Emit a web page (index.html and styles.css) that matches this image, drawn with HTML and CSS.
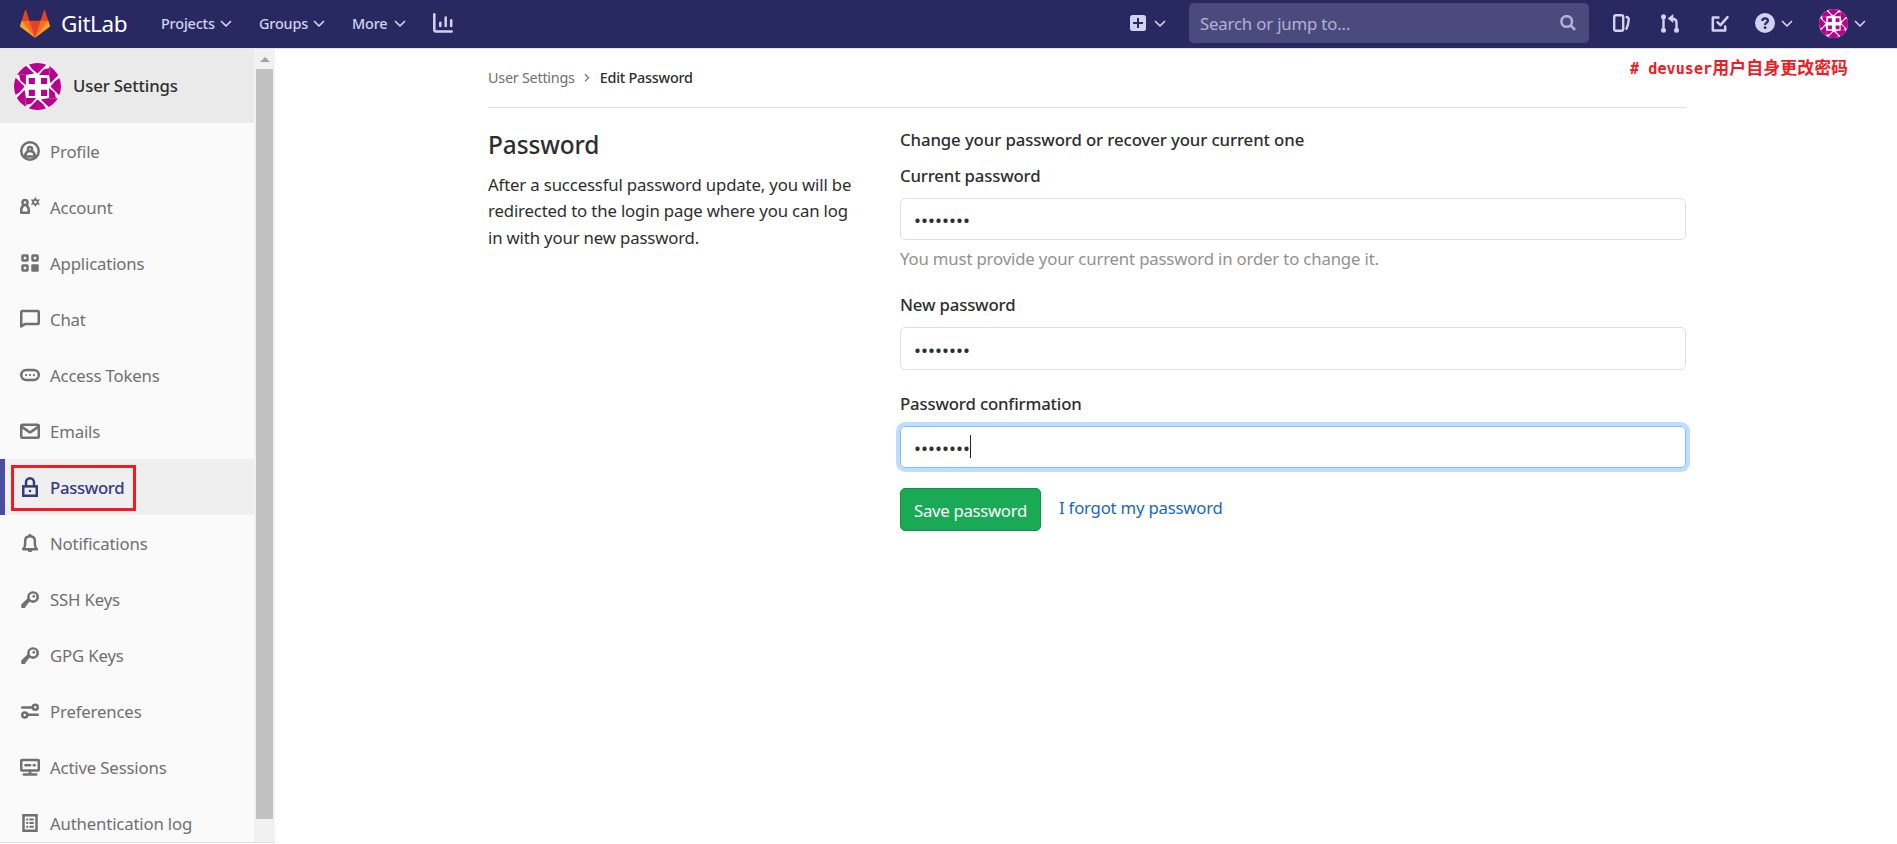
FILE: index.html
```html
<!DOCTYPE html>
<html lang="en">
<head>
<meta charset="utf-8">
<title>Edit Password · GitLab</title>
<link rel="stylesheet" href="styles.css">
</head>
<body>
<svg class="defs" aria-hidden="true">
  <symbol id="chevron" viewBox="0 0 12 8"><path d="M1.500 1.500 6 6l4.500-4.500" fill="none" stroke="currentColor" stroke-width="1.700" stroke-linecap="round" stroke-linejoin="round"/></symbol>
  <symbol id="key" viewBox="0 0 16 16"><path fill-rule="evenodd" d="M7.700 10.200 5.700 12.200v1.200H4.400v1.300l-.5.500H1.600a.6.6 0 0 1-.6-.6v-2.200l4.900-4.900a4.700 4.700 0 1 1 1.800 2.700zM10.400 9a2.700 2.700 0 1 0 0-5.400 2.700 2.700 0 0 0 0 5.400zM11 6.900a1.100 1.100 0 1 1 0-2.200 1.100 1.100 0 0 1 0 2.200z"/></symbol>
  <symbol id="identicon" viewBox="0 0 47 47">
    <circle cx="23.500" cy="23.500" r="23.500" fill="#fff"/>
    <clipPath id="round"><circle cx="23.500" cy="23.500" r="23.500"/></clipPath>
    <g fill="#b8008f" clip-path="url(#round)">
      <g id="arm"><path d="M11.700 1v10.700H1.500L6 7zM11.700 2.500l8.500 8-8.500 1.500zM14 0h20l-5 5-5.500 5.500L18 6zM35.200 5v6.900H25l4.500-5.500z"/></g>
      <use href="#arm" transform="rotate(90 23.500 23.500)"/>
      <use href="#arm" transform="rotate(180 23.500 23.500)"/>
      <use href="#arm" transform="rotate(270 23.500 23.500)"/>
      <path d="M14.700 15h6.200v6h-6.200zM27 15h6.200v6H27zM14.700 26.700h6.200v6.200h-6.200zM27 26.700h6.200v6.200H27z"/>
    </g>
  </symbol>
</svg>

<header class="navbar">
  <a class="brand">
    <svg class="tanuki" viewBox="0 0 36 36">
      <path fill="#e24329" d="M2 14l9.380 9v-9l-4-12.280c-.205-.632-1.176-.632-1.380 0zM34 14l-9.380 9v-9l4-12.280c.205-.632 1.176-.632 1.380 0zM18 34.380 3 14h30z"/>
      <path fill="#fc6d26" d="M18 34.380 11.380 14H2l4 11zM18 34.380 24.620 14H34l-4 11z"/>
      <path fill="#fca326" d="M2 14 .1 20.160c-.18.565 0 1.200.5 1.560l17.420 12.660zM34 14l1.900 6.160c.18.565 0 1.200-.5 1.560L18 34.380z"/>
    </svg>
    <span class="brand-name">GitLab</span>
  </a>
  <nav class="menu">
    <a class="menu-item projects">Projects <svg class="chev"><use href="#chevron"/></svg></a>
    <a class="menu-item groups">Groups <svg class="chev"><use href="#chevron"/></svg></a>
    <a class="menu-item more">More <svg class="chev"><use href="#chevron"/></svg></a>
    <svg class="icon20" viewBox="0 0 20 20" fill="none" stroke="currentColor" stroke-width="2.500" stroke-linecap="round"><path d="M1.300 1.300V16.800a1.800 1.800 0 0 0 1.800 1.800h15.600M7.300 9.800v3.200M12.700 4.500v8.500M18.200 7.200v5.800"/></svg>
  </nav>
  <div class="tools">
    <a class="tool new">
      <svg class="icon16" viewBox="0 0 16 16"><path fill="currentColor" fill-rule="evenodd" d="M2.500 0h11A2.500 2.500 0 0 1 16 2.500v11a2.500 2.500 0 0 1-2.500 2.500h-11A2.500 2.500 0 0 1 0 13.500v-11A2.500 2.500 0 0 1 2.500 0zM7 3v4H3v2h4v4h2V9h4V7H9V3z"/></svg>
      <svg class="chev"><use href="#chevron"/></svg>
    </a>
    <div class="search">
      <span>Search or jump to...</span>
      <svg class="icon16" viewBox="0 0 16 16" fill="none" stroke="currentColor" stroke-width="2.500"><circle cx="6.700" cy="6.500" r="5.300"/><path d="m10.700 10.500 4.400 4.400"/></svg>
    </div>
    <svg class="icon-issues" viewBox="0 0 17 18" fill="none" stroke="currentColor" stroke-width="2.400" stroke-linecap="round"><rect x="1.200" y="1.200" width="9" height="15.600" rx="1.800"/><path d="M13.600 3c1.700.5 2.300 1.100 2.100 3-.3 3-.8 6-2.200 8.800"/></svg>
    <svg class="icon-merge" viewBox="0 0 18 19" fill="none" stroke="currentColor" stroke-width="2.400"><path d="M2.500 3v13M15.500 15V8.500c0-2.300-1.500-3.800-4.500-3.800"/><path fill="currentColor" stroke="none" d="M12.300 0v9L6.700 4.600z"/><g fill="currentColor" stroke="none"><circle cx="2.500" cy="2.700" r="2.500"/><circle cx="2.500" cy="16.200" r="2.500"/><circle cx="15.500" cy="16.200" r="2.500"/></g></svg>
    <svg class="icon-todo" viewBox="0 0 18 17" fill="none" stroke="currentColor" stroke-width="2.500" stroke-linecap="round" stroke-linejoin="round"><path d="M7.500 2.400H1.800v13.200h12.400v-4.200M6.600 7.300l2.900 2.800 7-8"/></svg>
    <a class="tool help">
      <svg class="icon20" viewBox="0 0 20 20"><circle cx="10" cy="10" r="10" fill="currentColor"/><path d="M7.300 8c0-1.700 1.100-2.700 2.800-2.700s2.800 1 2.800 2.400c0 1.900-2.800 2-2.800 4.200" fill="none" stroke="#292961" stroke-width="2.300"/><circle cx="10.100" cy="14.700" r="1.400" fill="#292961"/></svg>
      <svg class="chev"><use href="#chevron"/></svg>
    </a>
    <a class="tool user">
      <svg class="avatar-sm"><use href="#identicon"/></svg>
      <svg class="chev"><use href="#chevron"/></svg>
    </a>
  </div>
</header>

<div class="page">
  <aside class="sidebar">
    <div class="side-body">
      <div class="context"><svg class="avatar"><use href="#identicon"/></svg><span>User Settings</span></div>
      <ul class="side-list">
        <li><svg viewBox="0 0 16 16"><g class="line"><circle cx="8" cy="8" r="7"/><circle cx="8" cy="6.400" r="1.700"/><path d="M4 13.300c0-3 1.300-4.700 2.800-5.300M12 13.300c0-3-1.300-4.700-2.800-5.300M4.500 12.300h7"/></g></svg><span>Profile</span></li>
        <li><svg viewBox="0 0 16 16"><g class="line"><circle cx="4" cy="4.400" r="2"/><path d="M2.900 6.700C1.500 7.600 1 8.700 1 10.500v2h6v-2C7 8.700 6.500 7.600 5.100 6.700"/></g><path fill-rule="evenodd" d="m12.300 0 1.200 2 2.400-.1-1.200 2.100 1.200 2.100-2.400-.1-1.200 2-1.200-2-2.400.1L9.900 4 8.700 1.900l2.400.1zM12.300 5.100a1.100 1.100 0 1 0 0-2.200 1.100 1.100 0 0 0 0 2.200z"/></svg><span>Account</span></li>
        <li><svg viewBox="0 0 16 16"><g class="line"><rect x="2" y="2" width="4" height="4" rx=".4"/><rect x="10" y="2" width="4" height="4" rx=".4"/><rect x="2" y="10" width="4" height="4" rx=".4"/></g><rect x="9" y="9" width="6" height="6" rx="1"/></svg><span>Applications</span></li>
        <li><svg viewBox="0 0 16 16"><path class="line" d="M1 14V2.600a1 1 0 0 1 1-1h12a1 1 0 0 1 1 1v8.300a1 1 0 0 1-1 1H4z"/></svg><span>Chat</span></li>
        <li><svg viewBox="0 0 16 16"><rect class="line" x="1" y="4" width="14" height="8" rx="4"/><circle cx="4.900" cy="8" r=".9"/><circle cx="8" cy="8" r=".9"/><circle cx="11.100" cy="8" r=".9"/></svg><span>Access Tokens</span></li>
        <li><svg viewBox="0 0 16 16"><g class="line"><rect x="1" y="3" width="14" height="10.400" rx="1"/><path d="m1.500 4.700 5.700 4a1.400 1.400 0 0 0 1.600 0l5.700-4"/></g></svg><span>Emails</span></li>
        <li class="active"><svg viewBox="0 0 16 16"><g class="line square"><rect x="2.600" y="7.500" width="10.800" height="7.500"/><path d="M4.800 7V4.200a3.200 3.200 0 0 1 6.400 0V7"/></g><rect x="7.100" y="10.300" width="1.800" height="1.800"/></svg><span>Password</span><i class="marker"></i></li>
        <li><svg viewBox="0 0 16 16"><path class="line" d="M2.500 12.900h11c-1.200-1.200-1.600-2.200-1.600-4V6.600c0-2.500-1.600-4-3.900-4s-3.900 1.500-3.900 4v2.300c0 1.800-.4 2.800-1.600 4z"/><path d="M7 .8h2v2H7zM6 13.300h4c0 1.200-.8 1.900-2 1.900s-2-.7-2-1.900z"/></svg><span>Notifications</span></li>
        <li><svg><use href="#key"/></svg><span>SSH Keys</span></li>
        <li><svg><use href="#key"/></svg><span>GPG Keys</span></li>
        <li><svg viewBox="0 0 16 16"><g class="line"><path d="M1.800 5.200h7.800M6.400 11h7.800"/><circle cx="12.200" cy="4.900" r="2"/><circle cx="3.800" cy="11.100" r="2"/></g></svg><span>Preferences</span></li>
        <li><svg viewBox="0 0 16 16"><g class="line"><rect x="1" y="2.300" width="14" height="8.400" rx=".5"/><path d="M8 11v3M3 14h10M4.300 6.500h3.800M11 6.500h.7"/></g></svg><span>Active Sessions</span></li>
        <li><svg viewBox="0 0 16 16"><rect class="line square" x="2.800" y="1.800" width="10.400" height="12.400"/><path d="M5 4.300h1.600v1.600H5zM7.500 4.300H11v1.600H7.500zM5 7.200h1.600v1.600H5zM7.500 7.200H11v1.600H7.500zM5 10.100h1.600v1.600H5zM7.500 10.100H11v1.600H7.500z"/></svg><span>Authentication log</span></li>
      </ul>
    </div>
    <div class="scroll"><i class="arrow"></i><i class="thumb"></i></div>
  </aside>

  <main class="content">
    <div class="crumbs"><a>User Settings</a><svg viewBox="0 0 6 10"><path d="m1 1.200 3.600 3.600L1 8.400" fill="none" stroke="#777" stroke-width="1.300"/></svg><strong>Edit Password</strong></div>
    <div class="columns">
      <section class="intro">
        <h4>Password</h4>
        <p>After a successful password update, you will be<br>redirected to the login page where you can log<br>in with your new password.</p>
      </section>
      <form class="form">
        <h5>Change your password or recover your current one</h5>
        <label>Current password</label>
        <div class="field">••••••••</div>
        <p class="hint">You must provide your current password in order to change it.</p>
        <label>New password</label>
        <div class="field tall">••••••••</div>
        <label>Password confirmation</label>
        <div class="field focus">••••••••<i class="caret"></i></div>
        <div class="actions"><button type="button">Save password</button><a>I forgot my password</a></div>
      </form>
    </div>
  </main>
</div>
<div class="note"># devuser<b>用户自身更改密码</b></div>
</body>
</html>
```
FILE: styles.css
```css
* { box-sizing: border-box; }
body {
  margin: 0;
  height: 844px;
  overflow: hidden;
  background: #fff;
  color: #2e2e2e;
  font: 400 16.75px/26.25px "Noto Sans", "Open Sans", sans-serif;
  letter-spacing: -0.16px;
  white-space: nowrap;
}
.defs { position: absolute; width: 0; height: 0; }
svg { display: block; flex: none; }

.navbar {
  display: flex;
  align-items: center;
  height: 48px;
  padding: 0 31px 0 20px;
  background: #292961;
  color: #d1d1f0;
}
.brand { display: flex; align-items: center; width: 141px; }
.tanuki { width: 30px; height: 30px; margin-top: -1px; }
.brand-name { margin: 0 0 0 11px; color: #fff; font-size: 22.5px; letter-spacing: -0.4px; }
.menu { display: flex; align-items: center; font-size: 14.4px; font-weight: 500; }
.menu-item { display: flex; align-items: center; justify-content: space-between; }
.projects { width: 71px; margin-right: 27px; }
.groups { width: 66px; margin-right: 27px; }
.more { width: 54px; margin-right: 27px; }
.chev { width: 12px; height: 8px; }
.icon20 { width: 20px; height: 20px; margin-top: -2px; }
.icon16 { width: 16px; height: 16px; margin-top: -2px; }
.tools { display: flex; align-items: center; margin-left: auto; }
.tool { display: flex; align-items: center; }
.new { gap: 8px; margin-right: 23px; }
.search {
  display: flex;
  align-items: center;
  justify-content: space-between;
  width: 400px;
  height: 40px;
  margin: -2px 24px 0 0;
  padding: 0 13px 0 11px;
  border-radius: 5px;
  background: #4b4a7d;
  color: #b2b1d7;
}
.search span { margin-top: 3px; }
.search .icon16 { margin-top: 0; }
.icon-issues { width: 17px; height: 18px; margin: -2px 31px 0 0; }
.icon-merge { width: 18px; height: 19px; margin: -1px 32px 0 0; }
.icon-todo { width: 18px; height: 17px; margin: -2px 26px 0 0; }
.help { gap: 6px; margin-right: 26px; }
.user { gap: 6px; }
.avatar-sm { width: 29px; height: 29px; margin-top: -2px; }

.page { display: flex; height: 796px; border-top: 1px solid #e3e3e8; }
.sidebar { display: flex; width: 275px; height: 794px; background: #fafafa; border-bottom: 1px solid #e1e1e1; overflow: hidden; }
.side-body { width: 254px; }
.context {
  display: flex;
  align-items: center;
  gap: 12px;
  height: 74px;
  padding-left: 14px;
  background: #eaeaea;
  font-weight: 500;
}
.context span { padding-top: 1px; }
.avatar { width: 47px; height: 47px; }
.side-list { margin: 0; padding: 0; list-style: none; color: #707070; }
.side-list li { position: relative; display: flex; align-items: center; gap: 10px; height: 56px; padding: 0 0 0 20px; }
.side-list span { padding-top: 2px; }
.side-list svg { width: 20px; height: 20px; fill: currentColor; }
.side-list .line { fill: none; stroke: currentColor; stroke-width: 2; stroke-linecap: round; stroke-linejoin: round; }
.side-list .square { stroke-linecap: butt; stroke-linejoin: miter; }
.side-list .active {
  background: #efefef;
  box-shadow: inset 5px 0 #4b4ba3;
  color: #393982;
  font-weight: 500;
  letter-spacing: -0.33px;
}
.marker { position: absolute; left: 11px; top: 6px; width: 125px; height: 46px; border: 3px solid #ee1c25; }
.scroll { display: flex; flex-direction: column; align-items: center; width: 21px; padding-top: 8px; background: #f1f1f1; }
.arrow { border: 5px solid transparent; border-top: 0; border-bottom-color: #a3a3a3; }
.thumb { width: 17px; height: 750px; margin-top: 7px; background: #c1c1c1; }

.content { width: 1198px; margin-left: 213px; }
.crumbs {
  display: flex;
  align-items: center;
  height: 59px;
  border-bottom: 1px solid #dfdfdf;
  color: #707070;
  font-size: 14.4px;
  letter-spacing: -0.25px;
}
.crumbs svg { width: 6px; height: 10px; margin: 0 10px 0 9px; }
.crumbs strong { color: #2e2e2e; font-weight: 500; }
.columns { display: grid; grid-template-columns: 412px 786px; }
.intro { padding-top: 22px; }
h4, h5, p { margin: 0; }
h4 { font-size: 24.4px; line-height: 30px; font-weight: 500; letter-spacing: -0.1px; }
.intro p { margin-top: 12px; letter-spacing: -0.15px; }
.form { padding-top: 19px; }
h5, label { display: block; font-size: 16.75px; font-weight: 500; line-height: 26px; }
h5 { letter-spacing: -0.1px; margin-bottom: 10px; }
.field {
  position: relative;
  display: flex;
  align-items: center;
  height: 42px;
  margin-top: 9px;
  padding: 2px 0 0 13px;
  border: 1px solid #dfdfdf;
  border-radius: 5px;
  font-size: 18.5px;
  letter-spacing: 0.03px;
}
.tall { height: 43px; margin-bottom: 21px; }
.hint { margin: 6px 0 20px; color: #919191; }
.focus { border-color: #80bdff; box-shadow: 0 0 0 4px #bfdeff; }
.caret { position: absolute; left: 69px; top: 8px; width: 1px; height: 23px; background: #222; }
.actions { display: flex; align-items: center; margin-top: 20px; }
button {
  width: 141px;
  height: 43px;
  padding: 2px 0 0;
  border: 1px solid #168f48;
  border-radius: 5px;
  background: #1aaa55;
  color: #fff;
  font: inherit;
  letter-spacing: -0.3px;
}
.actions a { margin: -3px 0 0 18px; color: #1b69b6; letter-spacing: -0.22px; }
.note {
  position: absolute;
  left: 1630px;
  top: 54px;
  color: #ee1c25;
  font: 700 15px/26px "DejaVu Sans Mono", "Liberation Mono", monospace;
  letter-spacing: 0.1px;
}
.note b { font: 700 16.9px/26px "Noto Sans CJK SC", sans-serif; }
```
